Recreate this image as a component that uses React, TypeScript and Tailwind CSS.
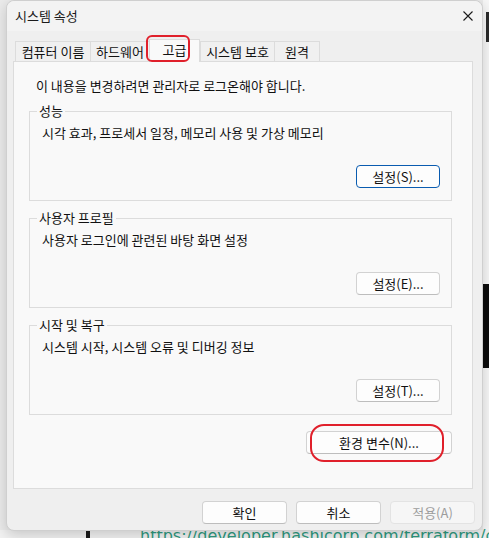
import React from 'react';

const font = { fontFamily: '"Noto Sans CJK KR", "Noto Sans", sans-serif' };

const tabs = [
  { label: '컴퓨터 이름', w: 'w-[75px]' },
  { label: '하드웨어', w: 'w-[59px]' },
  { label: '고급', w: 'w-[51px]', active: true },
  { label: '시스템 보호', w: 'w-[74px]' },
  { label: '원격', w: 'w-[46px]' },
];

const groups = [
  { title: '성능', desc: '시각 효과, 프로세서 일정, 메모리 사용 및 가상 메모리', button: '설정(S)...', focused: true },
  { title: '사용자 프로필', desc: '사용자 로그인에 관련된 바탕 화면 설정', button: '설정(E)...' },
  { title: '시작 및 복구', desc: '시스템 시작, 시스템 오류 및 디버깅 정보', button: '설정(T)...' },
];

const Button = ({
  children,
  width = 'w-[84px]',
  focused,
  disabled,
}: {
  children: React.ReactNode;
  width?: string;
  focused?: boolean;
  disabled?: boolean;
}) => (
  <button
    className={`${width} h-[23px] rounded-[4px] border text-[13px] leading-[16px] ${
      focused
        ? 'border-[#0a5cb0] bg-[#fdfdfd] text-[#111]'
        : disabled
        ? 'border-[#e3e3e3] bg-[#f6f6f6] text-[#9d9d9d]'
        : 'border-[#d2d2d2] border-b-[#bdbdbd] bg-[#fdfdfd] text-[#111]'
    }`}
  >
    {children}
  </button>
);

const GroupBox = ({ title, desc, button, focused }: (typeof groups)[number]) => (
  <div className="relative mt-[17px] border border-[#dcdcdc] pt-[13px] pb-[12px] pl-[12px] pr-[11px]">
    <span className="absolute -top-[9px] left-[7px] bg-[#f9f9f9] px-[2px] leading-[16px] text-[#111]">{title}</span>
    <div className="leading-[16px] text-[#111]">{desc}</div>
    <div className="mt-[24px] flex justify-end">
      <Button focused={focused}>{button}</Button>
    </div>
  </div>
);

export default function App() {
  return (
    <div className="relative h-[538px] w-[489px] overflow-hidden bg-[#ebebeb] text-[13px]" style={font}>
      {/* what shows behind the dialog */}
      <div className="absolute right-0 top-0 h-[538px] w-[6px] bg-[#f7f7f7]" />
      <div className="absolute right-0 top-[12px] h-[30px] w-[3px] bg-[#2a2a2a]" />
      <div className="absolute right-0 top-[284px] h-[84px] w-[6px] bg-[#0c0c0c]" />
      <div className="absolute left-0 top-[530px] h-[8px] w-[489px] bg-[#f2f2f2]" />
      <div className="absolute left-[86px] top-[531px] h-[7px] w-[4px] bg-[#1a1a1a]" />
      <div
        className="absolute left-[140px] top-[528px] whitespace-nowrap text-[16px] leading-none text-[#2f9a80]"
        style={{ fontFamily: '"DejaVu Sans", sans-serif' }}
      >
        https://developer.hashicorp.com/terraform/c
      </div>

      {/* dialog window */}
      <div className="relative z-10 ml-[6px] flex h-[531px] w-[477px] flex-col rounded-[8px] border border-[#cfcfcf] bg-[#efefef] shadow-[0_4px_14px_rgba(0,0,0,0.18)]">
        <div className="flex h-[30px] shrink-0 items-center justify-between rounded-t-[8px] bg-[#f3f3f3] pl-[8px] pr-[9px]">
          <span className="leading-[16px] text-[#1a1a1a]">시스템 속성</span>
          <svg width="10" height="10" viewBox="0 0 10 10">
            <path d="M0.5 0.5 L9.5 9.5 M9.5 0.5 L0.5 9.5" stroke="#1a1a1a" strokeWidth="1.1" fill="none" />
          </svg>
        </div>

        {/* tabs */}
        <div className="ml-[8px] mt-[8px] flex items-end">
          {tabs.map((t, i) =>
            t.active ? (
              <div
                key={t.label}
                className={`relative z-10 -mb-px flex h-[23px] ${t.w} items-start justify-center border-x border-t border-[#dcdcdc] bg-[#f9f9f9] pt-[2px] leading-[16px] text-[#111]`}
              >
                {t.label}
                <div className="absolute -left-[4px] -top-[5px] h-[27px] w-[44px] rounded-[6px] border-2 border-[#e0202b]" />
              </div>
            ) : (
              <div
                key={t.label}
                className={`flex h-[20px] ${t.w} items-center justify-center border-t border-l border-[#dcdcdc] bg-[#f0f0f0] leading-[16px] text-[#111] ${
                  i === tabs.length - 1 ? 'border-r' : ''
                }`}
              >
                {t.label}
              </div>
            )
          )}
        </div>

        {/* tab page */}
        <div className="ml-[6px] flex h-[428px] w-[460px] shrink-0 flex-col border border-[#dcdcdc] bg-[#f9f9f9] pl-[15px] pr-[20px] pt-[16px]">
          <div className="ml-[7px] leading-[16px] text-[#111]">이 내용을 변경하려면 관리자로 로그온해야 합니다.</div>
          {groups.map((g) => (
            <GroupBox key={g.title} {...g} />
          ))}
          <div className="mt-[16px] flex justify-end">
            <div className="relative">
              <Button width="w-[146px]">환경 변수(N)...</Button>
              <div className="absolute left-[4px] -top-[7px] h-[38px] w-[134px] rounded-[14px] border-2 border-[#e0202b]" />
            </div>
          </div>
        </div>

        {/* dialog buttons */}
        <div className="mt-[12px] flex justify-end gap-[9px] pr-[7px]">
          <Button width="w-[85px]">확인</Button>
          <Button width="w-[85px]">취소</Button>
          <Button width="w-[85px]" disabled>
            적용(A)
          </Button>
        </div>
      </div>
    </div>
  );
}
